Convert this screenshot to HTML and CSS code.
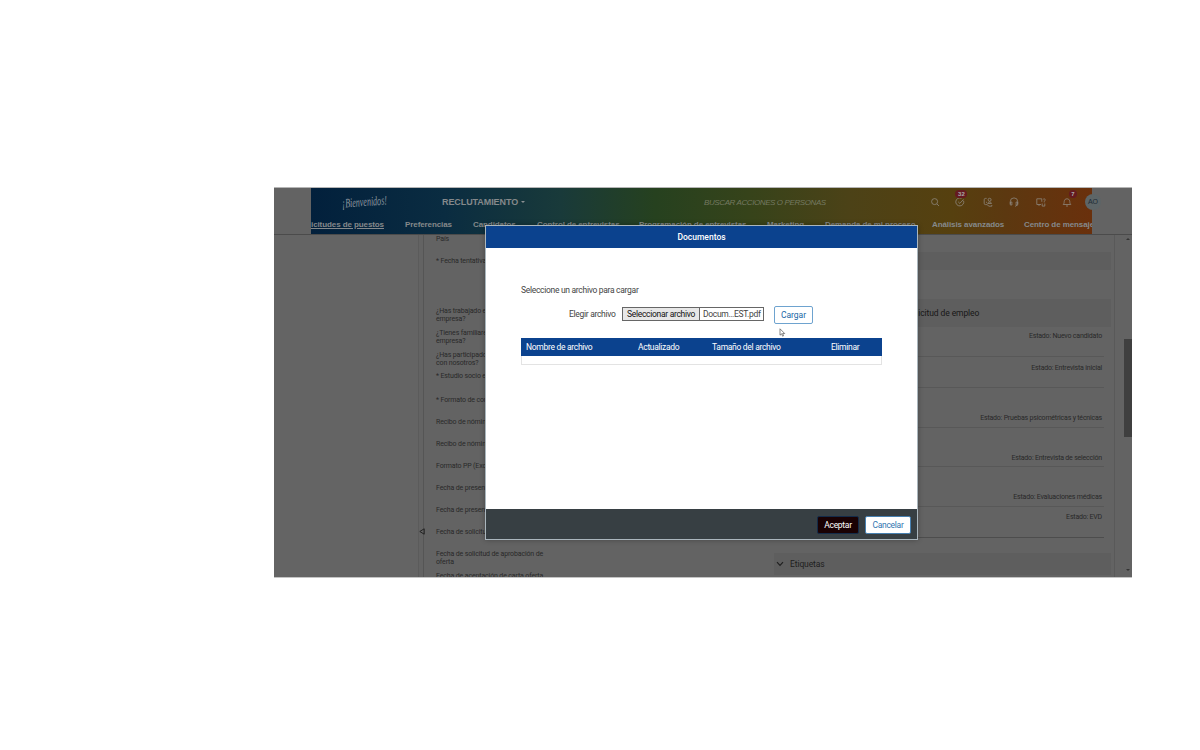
FILE: index.html
```html
<!DOCTYPE html>
<html lang="es">
<head>
<meta charset="utf-8">
<title>Reclutamiento</title>
<link rel="stylesheet" href="styles.css">
</head>
<body>
<div class="app">
  <header class="header">
    <div class="topbar">
      <svg class="logo" viewBox="0 0 48 18" width="48" height="18"><text x="1" y="13" textLength="45" lengthAdjust="spacingAndGlyphs" transform="rotate(-4 24 10)">¡Bienvenidos!</text></svg>
      <div class="module">RECLUTAMIENTO <i class="caret"></i></div>
      <div class="search">BUSCAR ACCIONES O PERSONAS</div>
      <div class="icons">
        <svg viewBox="0 0 10 10"><circle cx="4.6" cy="4.6" r="3"/><path d="M7 7l2 2"/></svg>
        <span class="icon"><svg viewBox="0 0 10 10"><path d="M8.6 3.7A4 4 0 1 1 6.5 1.3M3.2 4.8l1.6 1.6 3.7-4"/></svg><b class="badge wide">32</b></span>
        <svg viewBox="0 0 10 10"><path d="M3.6 1.4H2.5a1.3 1.3 0 0 0-1.3 1.3v3.6a1.3 1.3 0 0 0 1.3 1.3H4l2 1.6h2.8V8M3 5.3h1"/><circle cx="6.6" cy="2.8" r="1.5"/><path d="M4.7 6.5c.5-2 3.3-2 3.8 0z"/></svg>
        <svg viewBox="0 0 10 10"><path d="M1.3 7V4.6a3.7 3.7 0 0 1 7.4 0V7M1.3 5h1.6v3H1.3zM7.1 5h1.6v3H7.1zM8.5 8L6 9.4"/></svg>
        <svg viewBox="0 0 10 10"><path d="M5 7.5H.8V1.8h5v3M3 7.5v1.4M7.2 2.2c2.3-1.2 2.6 1.3 1 2.2v1M6.2 6.5v2.6h2.6V6.5"/></svg>
        <span class="icon"><svg viewBox="0 0 10 10"><path d="M1.2 7.5C2.5 6 2 5 2.3 3.8a2.8 2.8 0 0 1 5.4 0C8 5 7.5 6 8.8 7.5zM4 9h2"/></svg><b class="badge">7</b></span>
      </div>
      <div class="avatar">AO</div>
    </div>
    <nav class="tabs">
      <a class="tab t1">icitudes de puestos</a><a class="tab t2">Preferencias</a><a class="tab t3">Candidatos</a><a class="tab t4">Control de entrevistas</a><a class="tab t5">Programación de entrevistas</a><a class="tab t6">Marketing</a><a class="tab t7">Demanda de mi proceso</a><a class="tab t8">Análisis avanzados</a><a class="tab t9">Centro de mensaje</a>
    </nav>
  </header>
  <main class="content">
    <aside class="side"></aside>
    <div class="splitter"><svg class="collapse" viewBox="0 0 6 7"><path d="M5.2.8v5.4L.8 3.5z"/></svg></div>
    <section class="form">
      <p class="r22">País</p>
      <p class="r50">* Fecha tentativa de ingreso</p>
      <p class="r22">¿Has trabajado en la<br>empresa?</p>
      <p class="r22">¿Tienes familiares en la<br>empresa?</p>
      <p class="r21">¿Has participado<br>con nosotros?</p>
      <p class="r24">* Estudio socio económico</p>
      <p class="r22">* Formato de contratación</p>
      <p class="r22">Recibo de nómina 1</p>
      <p class="r22">Recibo de nómina 2</p>
      <p class="r22">Formato PP (Excel)</p>
      <p class="r22">Fecha de presentación</p>
      <p class="r22">Fecha de presentación</p>
      <p class="r22">Fecha de solicitud</p>
      <p class="r22">Fecha de solicitud de aprobación de<br>oferta</p>
      <p class="r22">Fecha de aceptación de carta oferta</p>
    </section>
    <section class="panel">
      <div class="band top"></div>
      <div class="band heading">Estado de la solicitud de empleo</div>
      <div class="state s1">Estado: Nuevo candidato</div>
      <div class="state s2">Estado: Entrevista inicial</div>
      <div class="state s3">Estado: Pruebas psicométricas y técnicas</div>
      <div class="state s4">Estado: Entrevista de selección</div>
      <div class="state s5">Estado: Evaluaciones médicas</div>
      <div class="state s6">Estado: EVD</div>
      <div class="band labels"><svg viewBox="0 0 8 6"><path d="M1 1.2l3 3.2 3-3.2"/></svg>Etiquetas</div>
    </section>
    <div class="scroll"><i class="up"></i><i class="thumb"></i><i class="down"></i></div>
  </main>
  <div class="dialog">
    <h2 class="title"><span>Documentos</span></h2>
    <div class="body">
      <p class="hint">Seleccione un archivo para cargar</p>
      <div class="picker">
        <label>Elegir archivo</label>
        <div class="file"><span class="choose">Seleccionar archivo</span><span class="name">Docum…EST.pdf</span></div>
        <button class="load">Cargar</button>
      </div>
      <div class="table">
        <div class="thead"><span>Nombre de archivo</span><span>Actualizado</span><span>Tamaño del archivo</span><span>Eliminar</span></div>
        <div class="empty"></div>
      </div>
    </div>
    <footer class="foot"><button class="ok">Aceptar</button><button class="cancel">Cancelar</button></footer>
    <svg class="cursor" viewBox="0 0 7 9"><path d="M1 .8v6.4l1.6-1.4 1 2.4 1-.5-1-2.2h2.1z"/></svg>
  </div>
</div>
</body>
</html>
```
FILE: styles.css
```css
* { box-sizing: border-box; }
body { margin: 0; background: #fff; font-family: Roboto, "Noto Sans", sans-serif; }
.app { position: relative; width: 858px; height: 391px; margin: 187px 0 0 274px; background: #636363; overflow: hidden; border-top: 1px solid #b5b5b5; border-bottom: 1px solid #c4c4c4; }
p, h2 { margin: 0; font-weight: 400; }
button { font: inherit; letter-spacing: inherit; padding: 0; }
svg { display: block; fill: none; }

.header { width: 781px; height: 46px; margin-left: 37px; color: #85898b; font-family: "Liberation Sans", sans-serif; background: linear-gradient(90deg, #02203c 0%, #0a2c41 17%, #193a3a 32%, #26411f 44%, #36431a 56%, #4c4217 69%, #56400f 82%, #5c3810 89%, #6a300c 100%); }
.topbar { display: flex; align-items: center; height: 28px; }
.logo { flex: none; margin-left: 30px; width: 48px; overflow: visible; }
.logo text { font: italic 13px "Liberation Serif", serif; fill: #8d979f; }
.module { flex: none; width: 211px; margin-left: 53px; font-size: 9px; font-weight: 700; letter-spacing: -.08px; white-space: nowrap; }
.caret { display: inline-block; border: 2px solid transparent; border-top-color: #8b9092; border-bottom: 0; vertical-align: 2px; }
.search { flex: none; width: 277px; padding-left: 51px; font-size: 8px; letter-spacing: -.4px; font-style: italic; white-space: nowrap; color: #747961; }
.icons { display: flex; flex: none; width: 142px; justify-content: space-between; }
.icons svg { width: 10px; height: 10px; stroke: #8e877c; stroke-width: .8; }
.icon { position: relative; }
.badge { position: absolute; left: 7px; top: -7px; width: 8px; height: 8px; border-radius: 4px; background: #651a20; color: #aaa; font-size: 6px; line-height: 8px; text-align: center; }
.badge.wide { left: 0; width: 12px; }
.icon:nth-of-type(1) { left: -1px; }
.avatar { position: relative; flex: none; width: 16px; height: 16px; margin-left: 13px; border-radius: 8px; background: #5d6567; color: #202c35; font-size: 7px; line-height: 16px; text-align: center; }
.tabs { display: flex; height: 18px; line-height: 18px; font-size: 8px; letter-spacing: -.09px; font-weight: 700; white-space: nowrap; overflow: hidden; }
.tab { flex: none; }
.t1 { width: 94px; text-decoration: underline; }
.t2 { width: 68px; }
.t3 { width: 64px; }
.t4 { width: 102px; }
.t5 { width: 128px; }
.t6 { width: 58px; }
.t7 { width: 107px; }
.t8 { width: 92px; }

.content { display: flex; height: 343px; overflow: hidden; border-top: 1px solid #4b4b4b; font-size: 7px; color: #292929; }
.side { width: 144px; background: #646464; }
.splitter { width: 6px; border-left: 1px solid #5b5b5b; border-right: 1px solid #555; padding-top: 293px; }
.collapse { width: 6px; height: 7px; stroke: #222; }
.form { width: 344px; padding: 1px 0 0 12px; letter-spacing: -.14px; line-height: 7.7px; white-space: nowrap; }
.form p { height: 22px; }
.form .r50 { height: 50px; }
.form .r21 { height: 21px; }
.form .r24 { height: 24px; }
.panel { width: 347px; padding: 17px 0 0 6px; letter-spacing: -.2px; border-right: 1px solid #595959; }
.band { background: #5e5e5e; width: 337px; }
.top { height: 18px; }
.heading { height: 28px; margin-top: 29px; padding-left: 86px; line-height: 29px; font-size: 8.5px; letter-spacing: -.1px; color: #171717; white-space: nowrap; }
.state { margin-left: 110px; text-align: right; border-bottom: 1px solid #585858; width: 220px; padding-right: 2px; line-height: 8px; white-space: nowrap; }
.s1 { height: 30px; padding-top: 5px; }
.s2 { height: 31px; padding-top: 7px; }
.s3 { height: 40px; padding-top: 26px; }
.s4 { height: 39px; padding-top: 26px; }
.s5 { height: 40px; padding-top: 26px; }
.s6 { height: 31px; padding-top: 6px; border-color: #4d4d4d; }
.labels { display: flex; align-items: center; gap: 6px; height: 22px; margin-top: 15px; padding-left: 2px; font-size: 8.5px; letter-spacing: -.1px; color: #202020; }
.labels svg { width: 8px; height: 6px; stroke: #202020; stroke-width: 1.2; }
.scroll { width: 17px; padding-left: 9px; }
.scroll i { display: block; }
.up, .down { width: 4px; margin: 3px auto 0; border: 2px solid transparent; }
.up { border-top: 0; border-bottom-color: #333; }
.down { border-bottom: 0; border-top-color: #333; margin-top: 132px; }
.thumb { height: 98px; margin-top: 99px; background: #3f3f3f; }

.dialog { position: absolute; left: 211px; top: 37px; width: 433px; height: 315px; background: #fff; border: 1px solid #aab6bd; color: #444; font-size: 8.5px; letter-spacing: -.3px; box-shadow: 0 0 5px rgba(0,0,0,.3); }
.title { height: 22px; line-height: 23px; background: #0b428e; color: #fff; font-size: 8.5px; letter-spacing: 0; font-weight: 500; text-align: center; }
.body { height: 261px; padding: 37px 35px 0; }
.hint { line-height: 11px; }
.picker { display: flex; align-items: center; height: 18px; margin-top: 9px; }
.picker label { width: 101px; padding-left: 48px; white-space: nowrap; }
.file { display: flex; width: 142px; height: 14px; border: 1px solid #666; line-height: 12px; white-space: nowrap; }
.choose { width: 77px; padding-left: 4px; background: #e7e7e7; border-right: 1px solid #666; color: #111; }
.name { padding-left: 3px; }
.load { width: 39px; height: 18px; margin: 2px 0 0 10px; letter-spacing: 0; color: #1a66a6; background: #fff; border: 1px solid #6ea3cf; border-radius: 2px; }
.table { margin-top: 15px; }
.thead { display: flex; height: 18px; line-height: 18px; background: #0b428e; color: #fff; padding-left: 5px; width: 361px; }
.thead span:nth-child(1) { width: 112px; }
.thead span:nth-child(2) { width: 74px; }
.thead span:nth-child(3) { width: 119px; }
.empty { width: 361px; height: 9px; border: 1px solid #e3e3e3; border-top: 0; }
.foot { display: flex; justify-content: flex-end; align-items: center; gap: 6px; height: 30px; padding: 1px 6px 0 0; background: #373f43; }
.ok { width: 42px; height: 18px; background: #190103; border: 1px solid #132b49; border-radius: 2px; color: #fff; }
.cancel { width: 46px; height: 18px; background: #fff; border: 1px solid #4780b0; border-radius: 2px; color: #3276b0; }
.cursor { position: absolute; left: 293px; top: 102px; width: 7px; height: 9px; fill: #fff; stroke: #555; stroke-width: .7; }
```
